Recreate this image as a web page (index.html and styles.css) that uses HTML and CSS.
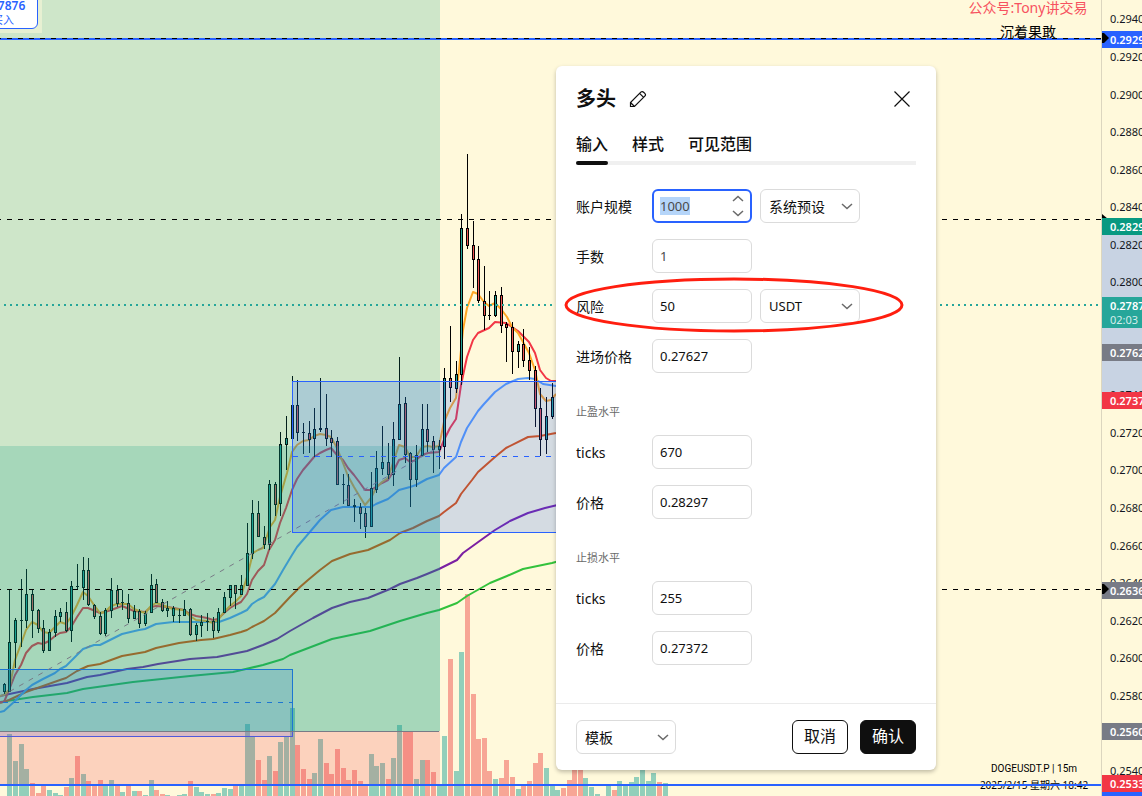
FILE: index.html
```html
<!DOCTYPE html>
<html lang="zh-CN">
<head>
  <meta charset="UTF-8" />
  <meta name="viewport" content="width=device-width, initial-scale=1.0"/>
  <title>DOGEUSDT.P 15m</title>
  <link rel="stylesheet" href="styles.css">
</head>
<body>
  <div class="workspace">
    <!-- Chart -->
    <div class="chart">
      <svg class="chart-canvas" role="img" aria-label="DOGEUSDT.P 15m">
        <g id="volume" class="crisp"></g>
        <g id="averages" class="averages"></g>
        <g id="candles" class="crisp"></g>

        <!-- lower range box -->
        <g class="crisp">
          <rect class="range-box" x="-10" y="669" width="302" height="67"/>
          <line class="range-mid" x1="3" y1="702" x2="292" y2="702"/>
        </g>

        <!-- older long position -->
        <g class="crisp">
          <rect class="profit" x="0" y="0" width="440" height="731"/>
          <rect class="profit" x="0" y="446" width="440" height="285"/>
          <rect class="loss" x="0" y="731" width="440" height="54"/>
          <line class="entry" x1="0" y1="731" x2="439" y2="731"/>
        </g>
        <line class="trend" x1="0" y1="697" x2="439" y2="447"/>

        <!-- upper range box -->
        <g class="crisp">
          <rect class="range-box" x="292" y="381" width="400" height="151"/>
          <line class="range-mid" x1="293" y1="456" x2="600" y2="456"/>
        </g>

        <text class="note note-red" x="1028" y="13">公众号:Tony讲交易</text>
        <text class="note" x="1028" y="37">沉着果敢</text>
        <text class="note note-small note-symbol" x="1034" y="772">DOGEUSDT.P | 15m</text>
        <text class="note note-small" x="1034" y="789">2025/2/15 星期六 18:42</text>

        <g class="crisp">
          <line class="level-blue" x1="0" y1="39" x2="100%" y2="39"/>
          <line class="level-blue" x1="0" y1="785" x2="100%" y2="785"/>
          <line class="level-dash" x1="-4" y1="38" x2="100%" y2="38"/>
          <line class="level-dash" x1="-4" y1="219" x2="100%" y2="219"/>
          <line class="level-dash" x1="-4" y1="589" x2="100%" y2="589"/>
          <line class="level-dots" x1="4" y1="305" x2="100%" y2="305"/>
        </g>
      </svg>

      <div class="buy-box">
        <button class="buy" type="button"><b>0.27876</b><span>买入</span></button>
      </div>
    </div>

    <!-- Price scale -->
    <div class="scale">
      <svg class="scale-canvas" id="scale" role="img" aria-label="价格"></svg>
    </div>
  </div>

  <!-- Settings dialog -->
  <form class="dialog" role="dialog" aria-labelledby="dialogTitle" onsubmit="return false">
    <header class="dialog-header">
      <h2 id="dialogTitle">多头</h2>
      <button class="icon-btn" type="button" aria-label="重命名">
        <svg width="18" height="18" viewBox="0 0 18 18"><path d="M1.500 16.500v-4L11.800 2.200a2 2 0 0 1 2.800 0l1.200 1.200a2 2 0 0 1 0 2.800L5.500 16.500zM1.500 12.500l4 4M10.600 3.400l4 4"/></svg>
      </button>
      <button class="icon-btn close" type="button" aria-label="关闭">
        <svg width="18" height="18" viewBox="0 0 18 18"><path d="M1.500 1.500l15 15M16.500 1.500l-15 15"/></svg>
      </button>
    </header>

    <nav class="tabs">
      <button class="tab active" type="button">输入</button>
      <button class="tab" type="button">样式</button>
      <button class="tab" type="button">可见范围</button>
    </nav>

    <div class="fields">
      <div class="row">
        <label for="account">账户规模</label>
        <div class="field focused">
          <input id="account" type="text" inputmode="numeric" value="1000">
          <div class="spinner">
            <svg width="12" height="7" viewBox="0 0 12 7"><path d="M1 6l5-4.500L11 6"/></svg>
            <svg width="12" height="7" viewBox="0 0 12 7"><path d="M1 1l5 4.500L11 1"/></svg>
          </div>
        </div>
        <div class="field">
          <select aria-label="账户货币"><option>系统预设</option></select>
          <svg class="chevron" width="12" height="7" viewBox="0 0 12 7"><path d="M1 1l5 4.500L11 1"/></svg>
        </div>
      </div>
      <div class="row">
        <label for="lots">手数</label>
        <div class="field"><input id="lots" class="muted" type="text" value="1"></div>
      </div>
      <div class="row">
        <label for="risk">风险</label>
        <div class="field"><input id="risk" type="text" value="50"></div>
        <div class="field">
          <select class="latin" aria-label="风险单位"><option>USDT</option></select>
          <svg class="chevron" width="12" height="7" viewBox="0 0 12 7"><path d="M1 1l5 4.500L11 1"/></svg>
        </div>
        <svg class="marker" width="340" height="56" viewBox="0 0 340 56"><ellipse cx="170" cy="28" rx="168" ry="26"/></svg>
      </div>
      <div class="row">
        <label for="entry">进场价格</label>
        <div class="field"><input id="entry" type="text" value="0.27627"></div>
      </div>

      <h3>止盈水平</h3>
      <div class="row">
        <label for="tpTicks">ticks</label>
        <div class="field"><input id="tpTicks" type="text" value="670"></div>
      </div>
      <div class="row">
        <label for="tpPrice">价格</label>
        <div class="field"><input id="tpPrice" type="text" value="0.28297"></div>
      </div>

      <h3>止损水平</h3>
      <div class="row">
        <label for="slTicks">ticks</label>
        <div class="field"><input id="slTicks" type="text" value="255"></div>
      </div>
      <div class="row">
        <label for="slPrice">价格</label>
        <div class="field"><input id="slPrice" type="text" value="0.27372"></div>
      </div>
    </div>

    <footer class="dialog-footer">
      <div class="field">
        <select aria-label="模板"><option>模板</option></select>
        <svg class="chevron" width="12" height="7" viewBox="0 0 12 7"><path d="M1 1l5 4.500L11 1"/></svg>
      </div>
      <button class="btn" type="button">取消</button>
      <button class="btn primary" type="submit">确认</button>
    </footer>
  </form>

  <script src="chart.js"></script>
</body>
</html>
```

FILE: styles.css
```css
* {
  box-sizing: border-box;
}
body {
  margin: 0;
  background: #fff9db;
  color: #0f0f0f;
  font-family: "Noto Sans", "Noto Sans CJK SC", sans-serif;
  font-size: 14px;
  overflow: hidden;
}
button, input, select {
  font-family: inherit;
  color: inherit;
}
.workspace {
  display: flex;
  height: 100vh;
}
.chart {
  position: relative;
  flex: 1;
  min-width: 0;
  overflow: hidden;
}
.scale {
  width: 41px;
  overflow: hidden;
  border-left: 1px solid #dcd6bf;
}
.chart-canvas, .scale-canvas {
  display: block;
  width: 100%;
  height: 100%;
}
.crisp {
  shape-rendering: crispEdges;
}

/* chart series */
.vol-up { fill: rgba(38, 166, 154, 0.5); }
.vol-down { fill: rgba(239, 83, 80, 0.5); }
.wick { fill: #000; }
.up { fill: #26a69a; }
.down { fill: #ef5350; }
.averages path {
  fill: none;
  stroke-width: 2;
  stroke-linejoin: round;
}

/* drawings */
.profit { fill: rgba(8, 153, 129, 0.2); }
.loss { fill: rgba(242, 54, 69, 0.2); }
.entry { stroke: #787b86; }
.trend {
  stroke: #787b86;
  stroke-dasharray: 5 6;
}
.range-box {
  fill: rgba(41, 98, 255, 0.2);
  stroke: #2962ff;
}
.range-mid {
  stroke: #2962ff;
  stroke-dasharray: 5 6;
}
.level-blue {
  stroke: #2962ff;
  stroke-width: 2;
}
.level-dash {
  stroke: #000;
  stroke-dasharray: 5 6;
}
.level-dots {
  stroke: #26a69a;
  stroke-width: 2;
  stroke-dasharray: 2 4;
}
.note {
  font-size: 14px;
  text-anchor: middle;
}
.note-red { fill: #f7525f; }
.note-small { font-size: 10px; }
.note-symbol { font-family: Roboto, sans-serif; }

/* price scale */
.tick {
  font-size: 11px;
  fill: #131722;
}
.tag-text {
  font-size: 11px;
  font-weight: 600;
  fill: #fff;
}
.tag-timer {
  font-size: 11px;
  fill: #d4edeb;
}

.buy-box {
  position: absolute;
  left: -36px;
  top: -12px;
  padding: 4px;
  background: rgba(255, 249, 219, 0.5);
}
.buy {
  display: flex;
  flex-direction: column;
  align-items: center;
  justify-content: flex-end;
  width: 70px;
  height: 37px;
  padding: 0 0 1px;
  border: 1px solid #2962ff;
  border-radius: 6px;
  background: #fff;
  color: #2962ff;
  font-size: 12px;
  line-height: 14px;
}
.buy b {
  font-weight: 600;
}
.buy span {
  font-size: 11px;
}

/* dialog */
.dialog {
  position: absolute;
  left: 556px;
  top: 66px;
  width: 380px;
  border-radius: 6px;
  background: #fff;
  box-shadow: 0 2px 4px rgba(0, 0, 0, 0.25);
}
.dialog-header {
  display: flex;
  align-items: center;
  gap: 13px;
  padding: 20px 25px 0 20px;
}
.dialog-header h2 {
  margin: 0;
  font-size: 20px;
  line-height: 26px;
}
.icon-btn {
  display: flex;
  padding: 0;
  border: 0;
  background: none;
  cursor: pointer;
}
.close {
  margin-left: auto;
}
.dialog path {
  fill: none;
  stroke: #0f0f0f;
  stroke-width: 1.2;
}
.tabs {
  display: flex;
  gap: 24px;
  margin: 20px 20px 0;
  background: linear-gradient(#f0f0f0, #f0f0f0) bottom / 100% 4px no-repeat;
}
.tab {
  padding: 0 0 5px;
  border: 0;
  background: none;
  font-size: 16px;
  font-weight: 500;
  line-height: 24px;
  cursor: pointer;
}
.tab::after {
  content: "";
  display: block;
  height: 4px;
  margin: 5px 0 -5px;
  border-radius: 2px;
}
.tab.active::after {
  background: #0f0f0f;
}
.fields {
  display: flex;
  flex-direction: column;
  gap: 16px;
  padding: 24px 20px 38px;
}
.fields h3 {
  margin: 16px 0 0;
  color: #6a6a6a;
  font-size: 11px;
  font-weight: 400;
  line-height: 14px;
}
.row {
  position: relative;
  display: flex;
  align-items: center;
  gap: 8px;
}
.row label {
  width: 68px;
}
.field {
  position: relative;
  width: 100px;
}
.field input, .field select {
  display: block;
  width: 100%;
  height: 34px;
  padding: 0 7px;
  border: 1px solid #dbdbdb;
  border-radius: 6px;
  outline: none;
  background: #fff;
  font-size: 13px;
}
.field select {
  padding: 0 8px;
  appearance: none;
  font-size: 14px;
}
.field .latin {
  font-size: 13px;
}
.field .muted {
  color: #4a4a4a;
}
.field.focused input {
  padding: 0 6px;
  border: 2px solid #2962ff;
}
.field input::selection {
  background: #b5d5f9;
  color: #4a4a4a;
}
.field path {
  stroke: #6a6a6a;
  stroke-width: 1.5;
}
.spinner {
  position: absolute;
  right: 8px;
  top: 6px;
  display: flex;
  flex-direction: column;
  gap: 8px;
}
.chevron {
  position: absolute;
  right: 7px;
  top: 14px;
  pointer-events: none;
}
.marker {
  position: absolute;
  left: -12px;
  top: -12px;
  pointer-events: none;
}
.marker ellipse {
  fill: none;
  stroke: #ff1e0f;
  stroke-width: 3;
}
.dialog-footer {
  display: flex;
  gap: 12px;
  padding: 16px 20px;
  border-top: 1px solid #ebebeb;
}
.dialog-footer .field {
  margin-right: auto;
}
.btn {
  width: 56px;
  height: 34px;
  padding: 0 0 2px;
  border: 1px solid #0f0f0f;
  border-radius: 6px;
  background: #fff;
  font-size: 16px;
  line-height: 24px;
  cursor: pointer;
}
.btn.primary {
  background: #0f0f0f;
  color: #fff;
}
```

FILE: chart.js
```js
const NS = "http://www.w3.org/2000/svg";

function add(parent, tag, attrs, text) {
  const el = document.createElementNS(NS, tag);
  for (const name in attrs) el.setAttribute(name, attrs[name]);
  if (text) el.textContent = text;
  parent.appendChild(el);
  return el;
}

// bar index -> pixel column of the wick
function barX(i) {
  return Math.floor(4.18 + 5.6485 * i);
}

// high, body top, body bottom, low, direction
const candles = [
  [683,684,692,694,1],[589,642,692,692,1],[618,620,643,668,1],[579,620,621,647,1],[569,594,621,628,1],
  [590,594,611,638,0],[609,610,629,633,0],[620,628,651,653,0],[629,632,651,651,1],[610,616,633,637,1],
  [608,612,617,622,1],[602,612,631,632,0],[581,586,631,642,1],[564,586,587,590,0],[557,570,588,600,1],
  [558,570,605,606,0],[604,605,617,619,0],[612,616,634,635,0],[608,610,634,636,1],[578,590,611,618,1],
  [585,590,604,607,0],[590,602,603,610,1],[594,603,619,623,0],[605,611,619,619,1],[609,611,624,628,0],
  [611,613,624,626,1],[574,585,613,613,1],[579,584,603,603,0],[599,602,611,612,0],[601,608,611,617,1],
  [606,608,616,622,1],[609,615,616,623,1],[600,609,616,616,1],[608,609,635,636,0],[623,625,635,641,1],
  [615,622,626,637,1],[613,621,622,631,1],[617,621,631,638,0],[608,612,631,633,1],[592,597,613,613,1],
  [585,585,598,606,1],[585,585,594,609,0],[575,585,595,595,1],[523,553,586,586,1],[500,513,554,559,1],
  [501,513,537,537,0],[526,537,545,549,0],[480,484,545,550,1],[482,484,505,516,0],[432,444,504,516,1],
  [416,438,445,470,1],[376,405,439,439,1],[380,405,433,441,0],[423,432,433,454,1],[421,433,440,453,0],
  [408,429,439,457,1],[378,428,430,432,1],[394,428,439,446,0],[430,438,443,457,0],[437,441,485,485,0],
  [474,484,485,504,1],[474,485,506,506,0],[499,505,507,522,1],[503,507,514,529,0],[508,513,527,538,0],
  [472,488,527,527,1],[451,468,490,493,1],[426,462,469,475,1],[443,462,475,479,0],[422,439,475,486,1],
  [357,404,440,440,1],[397,403,455,463,0],[452,453,480,507,0],[445,455,480,487,1],[404,429,456,456,1],
  [404,429,442,452,0],[436,441,450,473,0],[440,446,450,469,1],[368,378,447,459,1],[326,378,388,402,0],
  [361,374,389,393,1],[214,228,375,385,1],[154,228,246,249,0],[221,245,260,288,0],[246,259,301,303,0],
  [266,301,316,330,0],[291,315,316,320,0],[291,295,316,317,1],[287,295,326,333,0],[322,324,328,362,0],
  [322,327,352,374,0],[341,344,352,368,1],[329,344,361,367,0],[347,360,371,380,0],[366,370,409,427,0],
  [388,408,440,456,0],[397,416,440,454,1],[383,397,417,419,1]
];

// top edge of each volume bar, negative for a falling bar
const volume = [
  796,734,761,744,769,-783,-793,-786,790,793,795,-787,778,-756,774,-781,-786,-780,786,780,
  -786,792,-786,791,-791,795,780,-790,-794,795,796,795,794,-781,787,792,794,-794,793,788,
  789,-786,786,724,737,-760,-780,756,-771,742,736,708,-745,-769,-779,773,739,-763,-774,-749,
  -768,-780,-770,-781,-786,754,766,763,-779,758,725,-732,-732,779,760,-760,-772,786,736,-659,
  771,652,-594,-694,-739,-738,-771,779,-778,-760,-777,789,-786,-781,-763,-753,768,786,790,-788,
  -780,-762,-765,778,787,794,796,785,-790,781,785,782,777,768,781,773,-782,783
];

const averages = {
  "#33c23c": "0,702 33,697 67,693 83,689 133,682 190,676 233,672 263,665 283,659 290,655 332,639 370,631 400,621 427,613 439,610 457,603 467,596 490,583 507,576 523,569 552,563 570,558",
  "#7b1fa2": "0,696 33,689 67,683 87,677 100,675 127,669 143,667 158,664 190,659 217,657 247,651 263,645 277,639 290,631 313,618 332,608 350,602 368,598 390,589 400,584 417,578 427,574 439,569 457,560 463,553 481,540 495,530 510,521 528,513 545,508 570,502",
  "#e65100": "0,703 9,700 26,692 43,686 60,680 66,678 77,671 88,666 100,664 122,656 145,652 156,648 179,643 201,640 213,639 230,635 241,632 247,630 252,627 264,621 275,613 290,597 300,587 308,580 320,570 332,561 350,554 368,550 390,540 400,533 413,528 427,521 439,516 444,512 456,503 461,494 472,480 478,472 495,457 506,448 528,437 540,436 556,433 570,430",
  "#5b9cf6": "0,712 4,711 15,701 26,690 32,685 43,679 55,673 60,669 66,666 83,649 94,645 100,645 122,634 139,630 145,629 156,624 173,622 219,622 230,618 241,613 247,610 252,604 258,600 264,597 275,584 283,570 292,555 297,547 309,533 320,520 331,510 343,507 371,507 376,504 388,499 393,495 399,490 410,487 416,485 427,479 439,475 444,468 456,457 461,442 467,428 478,411 484,404 495,392 506,384 518,379 528,378 535,379 543,384 556,386 570,386",
  "#f23645": "0,702 4,702 9,690 15,675 21,665 26,653 32,646 38,643 43,644 49,641 55,636 60,633 66,632 71,627 77,617 83,608 88,608 100,613 105,612 111,610 122,606 134,611 145,612 151,607 156,606 168,607 179,609 184,610 190,614 196,616 207,618 213,620 218,619 224,613 230,608 235,605 241,602 247,594 252,580 258,571 264,565 269,550 275,540 280,523 286,508 292,490 297,479 303,470 309,463 314,457 320,453 326,450 331,448 337,455 343,460 348,468 354,475 360,483 365,490 371,490 382,483 388,480 393,472 399,460 405,458 410,462 416,460 422,455 428,453 439,452 444,440 450,428 456,419 461,385 467,357 473,340 478,333 489,328 495,322 506,323 512,327 518,331 529,342 535,353 540,370 546,378 551,381 570,381",
  "#ffa726": "0,696 4,695 9,690 15,660 21,644 26,630 32,622 38,625 43,632 49,633 55,627 60,622 66,624 71,617 77,605 83,592 88,596 94,605 100,613 105,612 111,606 117,604 128,604 134,609 139,611 145,613 151,606 156,603 162,605 173,609 184,610 190,616 196,620 207,621 213,623 218,620 224,612 230,606 235,602 241,596 247,577 253,553 258,550 263,548 270,527 275,520 280,497 287,473 292,452 297,445 303,441 309,440 314,436 320,434 326,435 331,437 337,448 343,463 348,476 354,487 360,497 365,505 371,498 376,488 382,482 388,478 393,463 399,445 405,447 410,457 416,457 422,447 428,446 433,447 439,446 444,422 450,408 456,398 459,370 463,330 467,308 473,292 478,294 484,302 489,306 495,303 501,309 507,317 512,327 518,333 523,342 529,353 535,370 540,394 546,401 551,400 556,394"
};

const ticks = [
  ["0.2940", 19], ["0.2920", 57], ["0.2900", 95], ["0.2880", 132], ["0.2860", 170], ["0.2840", 207],
  ["0.2820", 245], ["0.2800", 282], ["0.2760", 357], ["0.2740", 395], ["0.2720", 433], ["0.2700", 470],
  ["0.2680", 508], ["0.2660", 546], ["0.2640", 583], ["0.2620", 621], ["0.2600", 658], ["0.2580", 696],
  ["0.2540", 771]
];

const tags = [
  ["0.2929", 31, 17, "#2962ff"],
  ["0.2829", 218, 17, "#089981"],
  ["0.2787", 297, 31, "#26a69a"],
  ["0.2762", 344, 17, "#787b86"],
  ["0.2737", 392, 17, "#f23645"],
  ["0.2636", 582, 17, "#787b86"],
  ["0.2560", 723, 17, "#787b86"],
  ["0.2533", 775, 17, "#f23645"]
];

function drawChart() {
  const volumeLayer = document.getElementById("volume");
  volume.forEach((v, i) => {
    const y = Math.abs(v);
    add(volumeLayer, "rect", {
      class: v < 0 ? "vol-down" : "vol-up",
      x: barX(i) - 2, y: y, width: 5, height: 796 - y
    });
  });

  const averageLayer = document.getElementById("averages");
  for (const color in averages) {
    add(averageLayer, "path", { d: "M" + averages[color], stroke: color });
  }

  const candleLayer = document.getElementById("candles");
  candles.forEach(([high, top, bottom, low, rising], i) => {
    const x = barX(i);
    add(candleLayer, "rect", { class: "wick", x: x, y: high, width: 1, height: low - high });
    add(candleLayer, "rect", { class: "wick", x: x - 1, y: top, width: 3, height: bottom - top });
    if (bottom - top > 2) {
      add(candleLayer, "rect", {
        class: rising ? "up" : "down",
        x: x, y: top + 1, width: 1, height: bottom - top - 2
      });
    }
  });
}

function drawScale() {
  const scale = document.getElementById("scale");
  add(scale, "rect", { x: 0, y: 219, width: 41, height: 181, fill: "#c8d3e3" });
  ticks.forEach(([label, y]) => add(scale, "text", { class: "tick", x: 8, y: y + 4 }, label));
  add(scale, "path", { d: "M0 214l6 5-6 5z" });
  tags.forEach(([label, y, h, color]) => {
    add(scale, "rect", { x: 0, y: y, width: 41, height: h, fill: color });
    add(scale, "text", { class: "tag-text", x: 8, y: y + 13 }, label);
  });
  add(scale, "text", { class: "tag-timer", x: 8, y: 324 }, "02:03");
  add(scale, "rect", { x: 0, y: 792, width: 41, height: 10, fill: "#2962ff" });
  add(scale, "path", { d: "M0 33h2l5 5-5 5H0z" });
  add(scale, "path", { d: "M0 584h2l5 5-5 5H0z" });
}

drawChart();
drawScale();

const account = document.getElementById("account");
account.focus();
account.select();
```
